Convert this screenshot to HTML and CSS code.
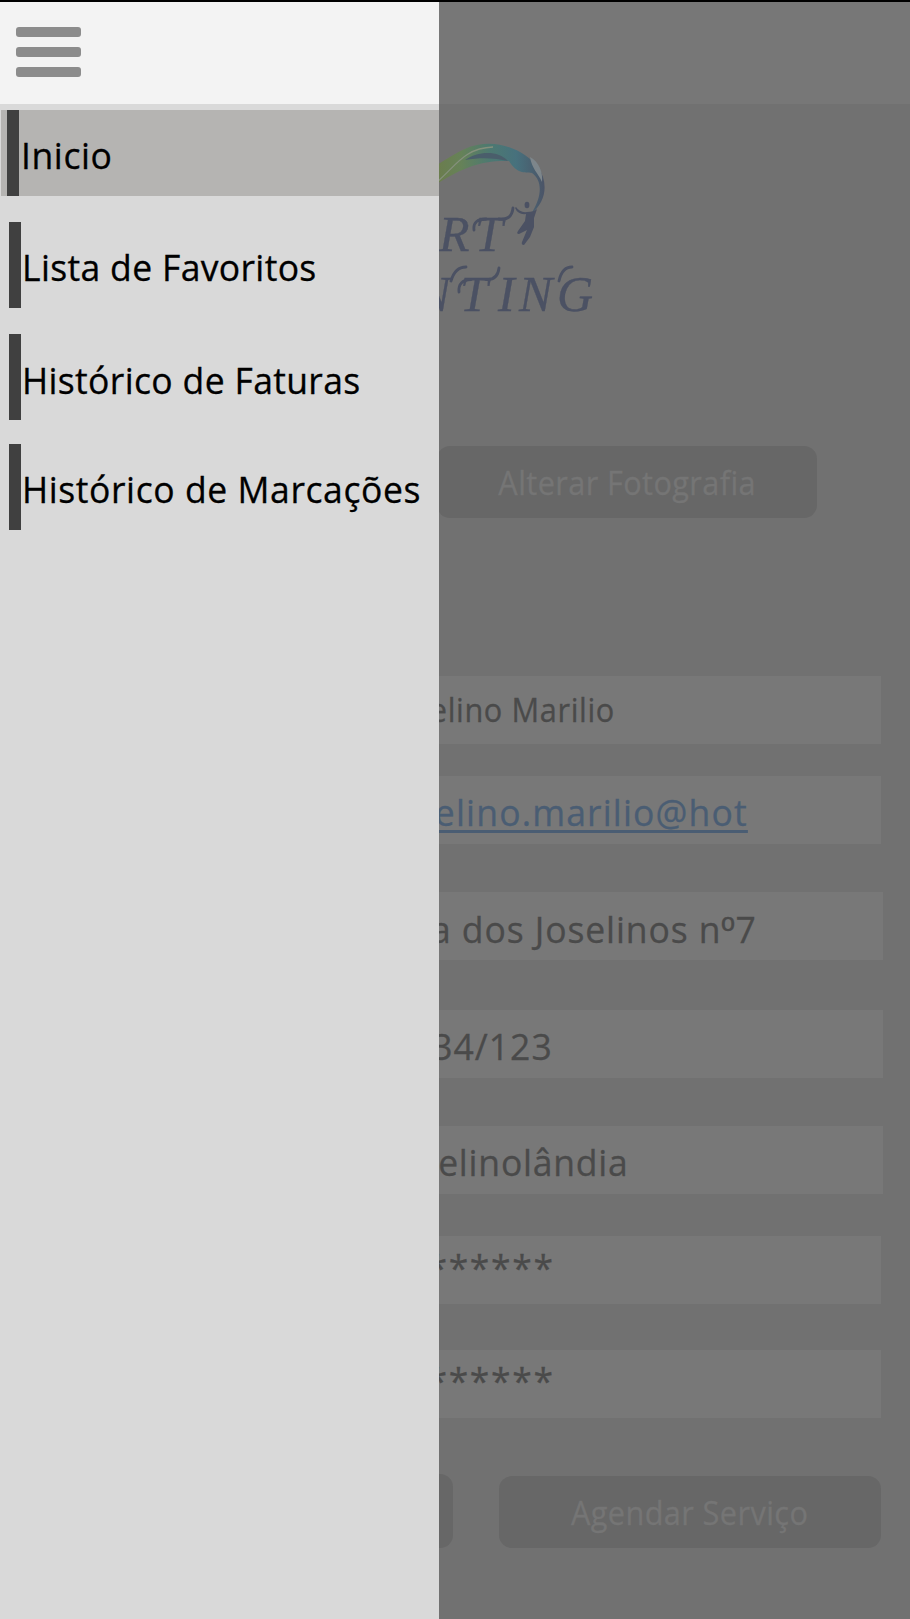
FILE: index.html
```html
<!DOCTYPE html>
<html lang="pt">
<head>
<meta charset="utf-8">
<title>Perfil</title>
<link rel="stylesheet" href="styles.css">
</head>
<body>
<main class="page">
  <header class="topbar"></header>
  <svg class="logo" width="180" height="210" viewBox="430 130 180 210" role="img" aria-label="Logo">
    <defs>
      <linearGradient id="wing" x1="430" x2="545" y1="0" y2="0" gradientUnits="userSpaceOnUse">
        <stop offset="0" stop-color="#6d7b4a"/><stop offset=".27" stop-color="#668258"/>
        <stop offset=".52" stop-color="#4d7971"/><stop offset=".75" stop-color="#47717d"/><stop offset="1" stop-color="#4b5366"/>
      </linearGradient>
    </defs>
    <path d="M425 171C446 161 460 148 477 145C501 140 525 151 538 167C549 183 546 202 531 214C542 197 543 181 532 173C524 172 517 174 509 161C484 160 461 166 425 192Z" fill="url(#wing)"/>
    <path d="M465 160C478 151 498 150 508 161C496 158 481 157 465 160Z" fill="#4a5e6b"/>
    <path d="M437 182C456 166 464 148 493 147" fill="none" stroke="#85907c" stroke-width="1.3"/>
    <path d="M530 157C539 162 543 172 542 182C538 173 532 169 530 157Z" fill="#7d868b"/>
    <path d="M516 207Q520 213 527 212Q534 212 537 209L534 218L534 227L530 237L524 245Q521 245 522 242L527 230L519 234Q516 234 518 231L525 221L526 214Q518 215 515 208Z" fill="#4b5163"/>
    <g fill="none" stroke="#4b5163" stroke-linecap="round">
      <path d="M474 230C473 222 478 219 486 219M499 219C507 220 512 217 513 208" stroke-width="2.8"/>
      <path d="M459 292C458 284 463 279.500 471 279.500M486 279.500C493 280 498 277 499 268" stroke-width="2.8"/>
      <path d="M451 281Q455 267 466 267M559 281Q562 267 572 267" stroke-width="2.8"/>
    </g>
    <ellipse cx="527" cy="205" rx="2.400" ry="3.300" fill="#4b5163"/>
    <text class="logo-text" y="251" x="439 475">RT</text>
    <text class="logo-text" y="311" x="417 460 498 519 557">NTING</text>
  </svg>
  <div class="button photo"><span class="label">Alterar Fotografia</span></div>
  <section class="form">
    <div class="field name"><span class="value">Joselino Marilio</span></div>
    <div class="field mail"><a class="value">joselino.marilio@hot</a></div>
    <div class="field street"><span class="value">Rua dos Joselinos n<span class="ordinal">º</span>7</span></div>
    <div class="field postal"><span class="value">1234/123</span></div>
    <div class="field city"><span class="value">Joselinolândia</span></div>
    <div class="field password"><span class="value">********</span></div>
    <div class="field confirm"><span class="value">********</span></div>
  </section>
  <div class="actions">
    <div class="button previous"></div>
    <div class="button schedule"><span class="label">Agendar Serviço</span></div>
  </div>
</main>
<aside class="drawer">
  <div class="drawer-head">
    <div class="burger"><i></i><i></i><i></i></div>
  </div>
  <nav class="menu">
    <div class="item active"><span class="text home">Inicio</span></div>
    <div class="item favorites"><span class="text">Lista de Favoritos</span></div>
    <div class="item invoices"><span class="text">Histórico de Faturas</span></div>
    <div class="item bookings"><span class="text">Histórico de Marcações</span></div>
  </nav>
</aside>
</body>
</html>
```
FILE: styles.css
```css
* { box-sizing: border-box; }
body {
  margin: 0;
  position: relative;
  width: 910px;
  height: 1619px;
  overflow: hidden;
  font-family: "Open Sans", "Noto Sans", sans-serif;
  background: #717171;
}
.page { display: flex; flex-direction: column; height: 1619px; border-top: 2px solid #000; }
.topbar { height: 102px; flex: none; background: #777; }
.logo { margin: 26px 0 0 430px; flex: none; overflow: visible; }
.logo-text { font: italic 50px "Liberation Serif", serif; fill: #4b5163; stroke: #4b5163; stroke-width: .3px; }
.button { display: flex; justify-content: center; height: 72px; border-radius: 13px; background: #676767; color: #757575; font-size: 32px; line-height: 73px; white-space: nowrap; }
.label { transform: scaleX(.96); letter-spacing: .4px; -webkit-text-stroke: .3px; }
.photo { width: 380px; margin: 106px 0 0 437px; flex: none; }
.form { margin-top: 158px; display: flex; flex-direction: column; }
.field { display: flex; justify-content: flex-end; height: 68px; width: 603px; margin-left: 280px; background: #787878; color: #4a4a4a; font-size: 37px; line-height: 74px; white-space: nowrap; }
.value { transform: scaleX(.96); transform-origin: right; letter-spacing: .95px; -webkit-text-stroke: .3px; }
.name { width: 601px; font-size: 32px; line-height: 67px; padding-right: 266px; }
.name .value { letter-spacing: .65px; }
.mail { width: 601px; margin-top: 32px; padding-right: 133px; line-height: 72px; }
.mail .value { color: #4a5d73; letter-spacing: 1.2px; text-decoration: underline; text-decoration-thickness: 3px; text-underline-offset: 4px; text-decoration-skip-ink: none; }
.street { margin-top: 48px; padding-right: 126px; }
.ordinal { font-family: "Liberation Sans", sans-serif; }
.postal { margin-top: 50px; padding-right: 330px; line-height: 72px; }
.postal .value { letter-spacing: 1px; }
.city { margin-top: 48px; padding-right: 254px; line-height: 72px; }
.city .value { letter-spacing: .8px; }
.password, .confirm { width: 601px; padding-right: 326px; line-height: 62px; }
.password .value, .confirm .value { letter-spacing: 1.7px; }
.password { margin-top: 42px; }
.confirm { margin-top: 46px; line-height: 60px; }
.actions { display: flex; align-items: flex-end; gap: 46px; margin: 56px 0 0 73px; }
.previous { width: 380px; height: 74px; }
.schedule { width: 382px; }
.drawer { position: absolute; top: 2px; left: 0; width: 439px; height: 1617px; background: #d9d9d9; }
.drawer-head { height: 102px; background: #f3f3f3; padding: 25px 0 0 16px; }
.burger { display: flex; flex-direction: column; gap: 10px; width: 65px; }
.burger i { height: 10px; border-radius: 3px; background: #8c8c8c; }
.menu { padding-top: 6px; color: #000; font-size: 37px; }
.item { display: flex; height: 86px; margin-left: 9px; padding-left: 2px; border-left: 12px solid #404040; line-height: 90px; white-space: nowrap; }
.item .text { transform: scaleX(.96); transform-origin: left; margin-left: -1px; letter-spacing: .6px; -webkit-text-stroke: .3px; }
.active { margin-left: 1px; padding-left: 0; border-left: 6px solid #b5b4b2; background: linear-gradient(90deg, #404040 12px, #b5b4b2 12px); }
.item.active .text { margin-left: 14px; }
.favorites { margin-top: 26px; }
.favorites .text { letter-spacing: .35px; }
.invoices { margin-top: 26px; line-height: 91px; }
.invoices .text { letter-spacing: .35px; }
.bookings { margin-top: 24px; }
```
